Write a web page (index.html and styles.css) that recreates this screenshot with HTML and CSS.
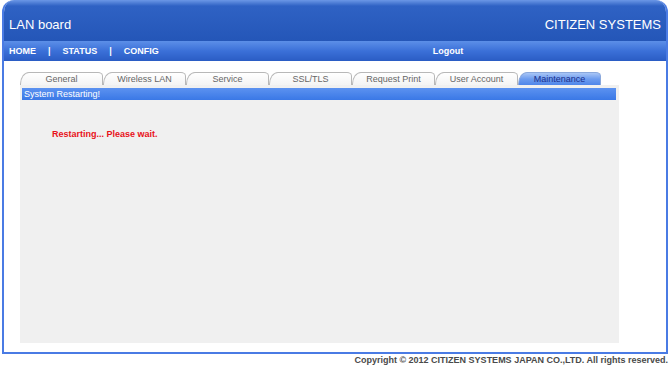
FILE: index.html
```html
<!DOCTYPE html>
<html>
<head>
    <meta charset="UTF-8">
    <title>LAN board</title>
    <link rel="stylesheet" href="styles.css">
</head>
<body>
    <div class="frame">
        <header class="top">
            <h1>LAN board</h1>
            <span class="brand">CITIZEN SYSTEMS</span>
        </header>

        <nav class="menu">
            <a href="#">HOME</a><span class="sep">|</span>
            <a href="#">STATUS</a><span class="sep">|</span>
            <a href="#">CONFIG</a>
            <a href="#" class="logout">Logout</a>
        </nav>

        <div class="content">
            <ul class="tabs">
                <li>General</li>
                <li>Wireless LAN</li>
                <li>Service</li>
                <li>SSL/TLS</li>
                <li>Request Print</li>
                <li>User Account</li>
                <li class="active">Maintenance</li>
            </ul>
            <div class="panel">
                <div class="bar">System Restarting!</div>
                <p class="msg">Restarting... Please wait.</p>
            </div>
        </div>
    </div>

    <footer class="copy">Copyright &copy; 2012 CITIZEN SYSTEMS JAPAN CO.,LTD. All rights reserved.</footer>
</body>
</html>
```

FILE: styles.css
```css
body {
    margin: 0;
    font-family: "Liberation Sans", Arial, sans-serif;
    background-color: #fff;
}

.frame {
    margin: 0 2px;
    height: 354px;
    box-sizing: border-box;
    border: 2px solid #4a7be4;
    border-top: none;
    border-radius: 12px 12px 0 0;
    overflow: hidden;
    display: flex;
    flex-direction: column;
}

.top {
    height: 41px;
    box-sizing: border-box;
    background: linear-gradient(to bottom, #6b97e6 0px, #2f62c4 6px, #2456b8 100%);
    display: flex;
    justify-content: space-between;
    align-items: flex-end;
    padding: 0 5px 9px 5px;
    color: #fff;
}

.top h1 {
    margin: 0;
    font-size: 13px;
    font-weight: normal;
}

.brand {
    font-size: 13px;
}

.menu {
    height: 20px;
    background: linear-gradient(to bottom, #5c8fe8 0%, #3b70d8 50%, #2a5cc4 100%);
    display: flex;
    align-items: center;
    padding-left: 5px;
    font-size: 9px;
    font-weight: bold;
}

.menu a {
    color: #fff;
    text-decoration: none;
}

.menu .sep {
    color: #fff;
    padding: 0 12px;
}

.menu .logout {
    margin-left: 274px;
}

.content {
    flex: 1;
    background-color: #fff;
    padding: 11px 0 9px 16px;
    display: flex;
    flex-direction: column;
}

.tabs {
    list-style: none;
    margin: 0;
    padding: 0;
    display: flex;
    height: 13px;
}

.tabs li {
    width: 83px;
    height: 13px;
    box-sizing: border-box;
    border: 1px solid #b8b8b8;
    border-bottom: none;
    border-radius: 9px 5px 0 0 / 12px 4px 0 0;
    background: linear-gradient(to bottom, #ffffff, #f4f4f4);
    color: #666;
    font-size: 9px;
    line-height: 12px;
    text-align: center;
}

.tabs li.active {
    background: linear-gradient(to bottom, #a9c6f6 0%, #6d9cef 50%, #4f86ea 100%);
    border-color: #8aa8dc;
    color: #1b2f8c;
}

.panel {
    width: 599px;
    flex: 1;
    background-color: #f0f0f0;
    padding: 3px 3px 0 2px;
    box-sizing: border-box;
}

.bar {
    height: 12px;
    background: linear-gradient(to bottom, #5c92f0, #3a78e6);
    color: #fff;
    font-size: 9px;
    line-height: 12px;
    padding-left: 2px;
}

.msg {
    margin: 29px 0 0 30px;
    color: #e8101a;
    font-size: 9px;
    font-weight: bold;
}

.copy {
    text-align: right;
    padding: 1px 2px 0 0;
    font-size: 9px;
    font-weight: bold;
    color: #4a4a4a;
}
```
